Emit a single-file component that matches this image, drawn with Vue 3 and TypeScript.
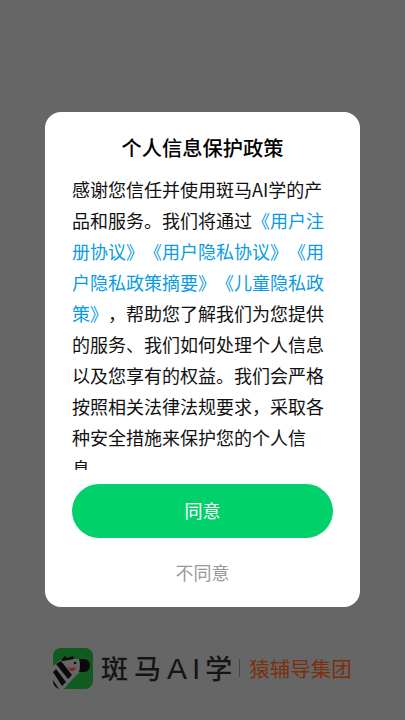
<script setup lang="ts">
const intro = '感谢您信任并使用斑马AI学的产品和服务。我们将通过'
const links = '《用户注册协议》《用户隐私协议》《用户隐私政策摘要》《儿童隐私政策》'
const rest = '，帮助您了解我们为您提供的服务、我们如何处理个人信息以及您享有的权益。我们会严格按照相关法律法规要求，采取各种安全措施来保护您的个人信息。'
</script>

<template>
  <div class="page">
    <section class="card">
      <h1 class="title">个人信息保护政策</h1>
      <div class="body">
        <p class="copy">{{ intro }}<span class="link">{{ links }}</span>{{ rest }}</p>
      </div>
      <button class="agree" type="button">同意</button>
      <button class="refuse" type="button">不同意</button>
    </section>
    <footer class="brand">
      <svg class="logo" viewBox="0 0 40 41" width="40" height="41" aria-hidden="true">
        <defs>
          <clipPath id="tile"><rect width="40" height="41" rx="8" /></clipPath>
        </defs>
        <g clip-path="url(#tile)">
          <rect width="40" height="41" fill="#115a20" />
          <path d="M0 18 L9 11 L27 11 L27 24 Q20 30 11 41 L0 41 Z" fill="#666666" />
          <path d="M26 11 L31 11 Q37 11.500 37 17.500 Q37 23.500 31 24 L26 24 Q28 17 26 11 Z" fill="#0a0a0a" />
          <path d="M8 12 L12 8 L14 10 L20 8 L21 11 L10 13 Z" fill="#0a0a0a" />
          <path d="M3 16 L8 13 L19 27 L15 31 Z M0 24 L3 21 L13 34 L9 38 Z M0 32 L6 41 L1 41 L0 39 Z" fill="#0a0a0a" />
          <circle cx="22" cy="15" r="1.300" fill="#0a0a0a" />
          <path d="M15 19 Q19 21 23 19 Q22 23 19 23 Q16 22.500 15 19 Z" fill="#8a2020" />
        </g>
      </svg>
      <span class="name">斑马<span class="latin">AI</span>学</span>
      <span class="divider"></span>
      <span class="group">猿辅导集团</span>
    </footer>
  </div>
</template>

<style scoped>
.page {
  width: 405px;
  height: 720px;
  box-sizing: border-box;
  padding-top: 112px;
  background: #666666;
  font-family: "Noto Sans CJK SC", "Noto Sans", sans-serif;
  overflow: hidden;
}
.card {
  width: 315px;
  height: 495px;
  margin: 0 auto;
  box-sizing: border-box;
  padding: 21px 27px 0;
  display: flex;
  flex-direction: column;
  background: #ffffff;
  border-radius: 16px;
}
.title {
  margin: 0;
  height: 29px;
  font-size: 20.25px;
  line-height: 29px;
  font-weight: 500;
  color: #000000;
  text-align: center;
}
.body {
  height: 296px;
  margin-top: 12px;
  overflow: hidden;
}
.copy {
  margin: 0;
  font-size: 18px;
  line-height: 31px;
  color: #111111;
  text-spacing-trim: space-all;
}
.link {
  color: #0a9be2;
}
.agree {
  height: 54px;
  margin-top: 14px;
  padding: 0 0 2px;
  flex: none;
  border: 0;
  border-radius: 27px;
  background: #00d16a;
  color: #ffffff;
  font: 400 18px "Noto Sans CJK SC", sans-serif;
}
.refuse {
  height: 26px;
  margin-top: 21px;
  flex: none;
  border: 0;
  padding: 0;
  background: transparent;
  color: #999999;
  font: 400 18px "Noto Sans CJK SC", sans-serif;
}
.brand {
  display: flex;
  align-items: center;
  height: 42px;
  margin-top: 40px;
  padding-left: 53px;
}
.logo {
  flex: none;
}
.name {
  margin-left: 8px;
  font-size: 27px;
  font-weight: 500;
  line-height: 42px;
  letter-spacing: 6px;
  color: #151515;
  white-space: nowrap;
}
.latin {
  font-family: "Liberation Sans", sans-serif;
  font-size: 30px;
  font-weight: 400;
  letter-spacing: 5px;
}
.divider {
  width: 1px;
  height: 18px;
  margin-left: 1px;
  background: #444444;
}
.group {
  margin-left: 9px;
  font-size: 20.500px;
  line-height: 42px;
  color: #7c2f0d;
  white-space: nowrap;
}
</style>
